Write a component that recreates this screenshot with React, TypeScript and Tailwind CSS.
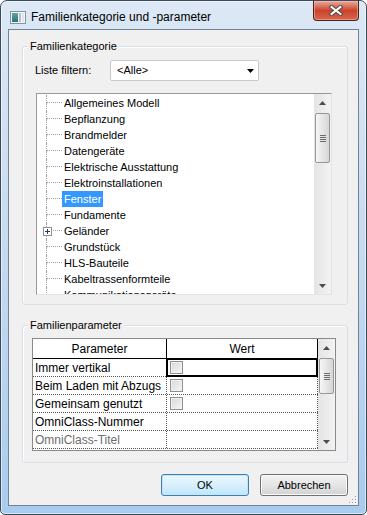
const categories = [
  "Allgemeines Modell",
  "Bepflanzung",
  "Brandmelder",
  "Datengeräte",
  "Elektrische Ausstattung",
  "Elektroinstallationen",
  "Fenster",
  "Fundamente",
  "Geländer",
  "Grundstück",
  "HLS-Bauteile",
  "Kabeltrassenformteile",
  "Kommunikationsgeräte",
];

const params = [
  { label: "Immer vertikal", check: true, selected: true },
  { label: "Beim Laden mit Abzugs", check: true },
  { label: "Gemeinsam genutzt", check: true },
  { label: "OmniClass-Nummer" },
  { label: "OmniClass-Titel", dim: true },
];

export default function App() {
  return (
    <div className="h-[515px] w-[367px] bg-white font-['Liberation_Sans',Arial,sans-serif] text-[11px] text-black">
      <div className="flex h-[515px] w-[367px] flex-col rounded-t-[7px] rounded-b-[5px] border border-[#3b4b5d] bg-gradient-to-b from-[#dce8f5] via-[#c6daef] to-[#a9cbee] px-[7px] pb-[8px] shadow-[inset_0_0_0_1px_rgba(255,255,255,0.55)]">
        <TitleBar />

        <div className="relative flex flex-1 flex-col border border-[#6f8399] bg-[#f0f0f0]">
          {/* Familienkategorie */}
          <div className="relative ml-[13px] mt-[16px] h-[259px] w-[326px] rounded-[3px] border border-[#d5dfe5] pl-[12px] pt-[13px] shadow-[inset_1px_1px_0_#fff]">
            <span className="absolute -top-[8px] left-[5px] bg-[#f0f0f0] px-[2px] leading-[14px]">
              Familienkategorie
            </span>
            <div className="flex h-[21px] items-center">
              <span className="w-[75px]">Liste filtern:</span>
              <div className="flex h-[21px] w-[149px] items-center justify-between rounded-[2px] border border-[#c5c9cf] bg-white pl-[6px] pr-[4px]">
                <span>&lt;Alle&gt;</span>
                <svg width="7" height="4" viewBox="0 0 7 4">
                  <polygon points="0,0 7,0 3.5,4" fill="#000" />
                </svg>
              </div>
            </div>

            <div className="ml-[1px] mt-[12px] flex h-[202px] w-[296px] border border-b-[#e3e3e3] border-l-[#9a9a9a] border-r-[#e3e3e3] border-t-[#9a9a9a] bg-white">
              <div className="flex-1 overflow-hidden pt-[1px]">
                {categories.map((c) => (
                  <TreeRow key={c} label={c} selected={c === "Fenster"} expandable={c === "Geländer"} />
                ))}
              </div>
              <ScrollBar thumb="mt-[2px] h-[50px]" />
            </div>
          </div>

          {/* Familienparameter */}
          <div className="relative ml-[13px] mt-[20px] h-[138px] w-[326px] rounded-[3px] border border-[#d5dfe5] pl-[9px] pt-[12px] shadow-[inset_1px_1px_0_#fff]">
            <span className="absolute -top-[8px] left-[5px] bg-[#f0f0f0] px-[2px] leading-[14px]">
              Familienparameter
            </span>
            <div className="flex h-[113px] w-[304px] overflow-hidden border border-[#8a8a8a] bg-white text-[12px]">
              <div className="flex flex-1 flex-col">
                <div className="flex h-[20px] shrink-0 border-b border-black">
                  <div className="flex w-[134px] items-center justify-center border-r border-black">Parameter</div>
                  <div className="flex flex-1 items-center justify-center border-r border-black">Wert</div>
                </div>
                {params.map((p) => (
                  <div key={p.label} className="flex h-[18px] shrink-0 border-b border-dotted border-[#555]">
                    <div
                      className={`w-[134px] overflow-hidden whitespace-nowrap border-r border-dotted border-[#555] pl-[2px] leading-[18px] ${
                        p.dim ? "text-[#6d6d6d]" : ""
                      }`}
                    >
                      {p.label}
                    </div>
                    <div className="relative flex flex-1 items-center border-r border-dotted border-[#555] pl-[2px]">
                      {p.check && <CheckBox />}
                      {p.selected && <div className="absolute -left-px -top-px bottom-[-1px] right-[-1px] border-2 border-black" />}
                    </div>
                  </div>
                ))}
              </div>
              <ScrollBar thumb="mt-[2px] h-[36px]" />
            </div>
          </div>

          <div className="mt-[11px] flex justify-end gap-[11px] pr-[10px]">
            <button className="h-[22px] w-[88px] rounded-[3px] border border-[#3c7fb1] bg-gradient-to-b from-[#eaf6fd] via-[#d9f0fc] to-[#bee6fd] shadow-[inset_0_0_0_1px_#c4e5f6]">
              OK
            </button>
            <button className="h-[22px] w-[88px] rounded-[3px] border border-[#707070] bg-gradient-to-b from-[#f2f2f2] via-[#e5e5e5] to-[#d2d2d2] shadow-[inset_0_0_0_1px_#fbfbfb]">
              Abbrechen
            </button>
          </div>

          <svg className="absolute bottom-[1px] right-[1px]" width="8" height="8" viewBox="0 0 8 8">
            {[
              [6, 0],
              [6, 3],
              [3, 3],
              [6, 6],
              [3, 6],
              [0, 6],
            ].map(([x, y]) => (
              <g key={`${x}-${y}`}>
                <rect x={x + 1} y={y + 1} width="1" height="1" fill="#fff" />
                <rect x={x} y={y} width="1" height="1" fill="#9a9a9a" />
              </g>
            ))}
          </svg>
        </div>
      </div>
    </div>
  );
}

function TitleBar() {
  return (
    <div className="flex h-[28px] shrink-0 items-start">
      <div className="ml-[2px] mt-[9px] flex items-center gap-[5px]">
        <svg width="16" height="13" viewBox="0 0 16 13">
          <defs>
            <linearGradient id="ic" x1="0" y1="0" x2="0" y2="1">
              <stop offset="0" stopColor="#5fa9a0" />
              <stop offset="1" stopColor="#2f6f78" />
            </linearGradient>
          </defs>
          <rect x="0.5" y="0.5" width="15" height="12" fill="#f4f6f8" stroke="#8592a0" />
          <rect x="2" y="2" width="6" height="9" fill="url(#ic)" />
          <rect x="9" y="2" width="2" height="9" fill="#b8c2cc" />
          <rect x="12" y="2" width="2" height="9" fill="#dfe5ea" />
        </svg>
        <span className="text-[12px] leading-[14px]">Familienkategorie und -parameter</span>
      </div>
      <div className="ml-auto flex h-[20px] w-[46px] items-center justify-center rounded-b-[4px] border border-t-0 border-[#4a2119] bg-gradient-to-b from-[#e9a898] via-[#c8432c] to-[#d9654a] shadow-[inset_0_0_0_1px_rgba(255,210,200,0.45)]">
        <svg width="14" height="11" viewBox="0 0 14 11">
          <path d="M2.5 2 L11.5 9 M11.5 2 L2.5 9" stroke="#4b4b4b" strokeWidth="4" strokeLinecap="square" />
          <path d="M2.5 2 L11.5 9 M11.5 2 L2.5 9" stroke="#fff" strokeWidth="2" strokeLinecap="square" />
        </svg>
      </div>
    </div>
  );
}

function TreeRow({ label, selected, expandable }: { label: string; selected?: boolean; expandable?: boolean }) {
  return (
    <div className="flex h-[16px] items-stretch whitespace-nowrap leading-[16px]">
      <div className="relative ml-[9px] flex w-[16px] flex-col">
        <div className="h-[8px] border-b border-l border-dotted border-[#a0a0a0]" />
        <div className="flex-1 border-l border-dotted border-[#a0a0a0]" />
        {expandable && (
          <svg className="absolute -left-[3px] top-[4px]" width="9" height="9" viewBox="0 0 9 9">
            <rect x="0.5" y="0.5" width="8" height="8" fill="#fff" stroke="#919191" />
            <path d="M2 4.5 H7 M4.5 2 V7" stroke="#1e3a6e" strokeWidth="1" />
          </svg>
        )}
      </div>
      <span className={selected ? "bg-[#3399ff] px-[2px] text-white" : "px-[2px]"}>{label}</span>
    </div>
  );
}

function ScrollBar({ thumb }: { thumb: string }) {
  return (
    <div className="flex w-[17px] shrink-0 flex-col bg-gradient-to-r from-[#e4e4e4] to-[#f3f3f3]">
      <div className="flex h-[17px] items-center justify-center">
        <svg width="7" height="4" viewBox="0 0 7 4">
          <polygon points="3.5,0 7,4 0,4" fill="#4d4d4d" />
        </svg>
      </div>
      <div className="flex-1">
        <div
          className={`mx-[1px] flex items-center justify-center rounded-[2px] border border-[#979797] bg-gradient-to-r from-[#f6f6f6] to-[#d6d6d6] ${thumb}`}
        >
          <div className="flex flex-col gap-[1px]">
            <div className="h-px w-[6px] bg-[#6b6b6b]" />
            <div className="h-px w-[6px] bg-[#6b6b6b]" />
            <div className="h-px w-[6px] bg-[#6b6b6b]" />
            <div className="h-px w-[6px] bg-[#6b6b6b]" />
          </div>
        </div>
      </div>
      <div className="flex h-[17px] items-center justify-center">
        <svg width="7" height="4" viewBox="0 0 7 4">
          <polygon points="0,0 7,0 3.5,4" fill="#4d4d4d" />
        </svg>
      </div>
    </div>
  );
}

function CheckBox() {
  return (
    <div className="ml-[1px] h-[13px] w-[13px] border border-[#8e8f8f] bg-gradient-to-br from-[#d8d8d8] to-[#f6f6f6] shadow-[inset_0_0_0_1px_#f1f1f1]" />
  );
}
